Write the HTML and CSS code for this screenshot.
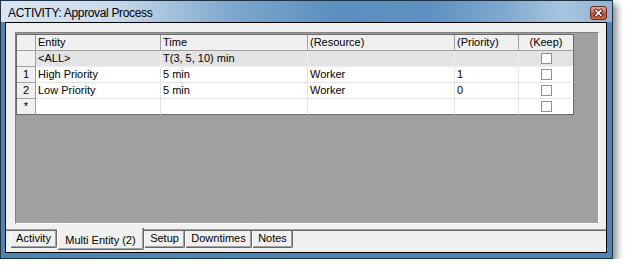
FILE: index.html
```html
<!DOCTYPE html>
<html lang="en">
<head>
    <meta charset="UTF-8">
    <title>ACTIVITY: Approval Process</title>
    <link rel="stylesheet" href="styles.css">
</head>
<body>
    <div class="window">
        <div class="titlebar">
            <span class="title">ACTIVITY: Approval Process</span>
            <span class="close-btn">
                <svg width="17" height="14" viewBox="0 0 17 14">
                    <defs>
                        <linearGradient id="closeGrad" x1="0" y1="0" x2="0" y2="1">
                            <stop offset="0" stop-color="#eab0a0"/>
                            <stop offset="0.45" stop-color="#d26a52"/>
                            <stop offset="0.5" stop-color="#c2452c"/>
                            <stop offset="1" stop-color="#d9694a"/>
                        </linearGradient>
                    </defs>
                    <rect x="0.5" y="0.5" width="16" height="13" rx="2.5" fill="url(#closeGrad)" stroke="#6b2a1e"/>
                    <path d="M6 4.5 L11 9.5 M11 4.5 L6 9.5" stroke="#3b1a14" stroke-width="3.2" stroke-linecap="square"/>
                    <path d="M6 4.5 L11 9.5 M11 4.5 L6 9.5" stroke="#ffffff" stroke-width="1.6" stroke-linecap="square"/>
                </svg>
            </span>
        </div>
        <div class="client">
            <div class="tab-body">
                <div class="grid-area">
                    <table class="grid">
                        <tr class="head-row">
                            <th class="row-head"></th>
                            <th class="col-entity">Entity</th>
                            <th class="col-time">Time</th>
                            <th class="col-resource">(Resource)</th>
                            <th class="col-priority">(Priority)</th>
                            <th class="col-keep center">(Keep)</th>
                        </tr>
                        <tr class="all-row">
                            <td class="row-head"></td>
                            <td>&lt;ALL&gt;</td>
                            <td>T(3, 5, 10) min</td>
                            <td></td>
                            <td></td>
                            <td class="center"><span class="checkbox"></span></td>
                        </tr>
                        <tr>
                            <td class="row-head">1</td>
                            <td>High Priority</td>
                            <td>5 min</td>
                            <td>Worker</td>
                            <td>1</td>
                            <td class="center"><span class="checkbox"></span></td>
                        </tr>
                        <tr>
                            <td class="row-head">2</td>
                            <td>Low Priority</td>
                            <td>5 min</td>
                            <td>Worker</td>
                            <td>0</td>
                            <td class="center"><span class="checkbox"></span></td>
                        </tr>
                        <tr class="last-row">
                            <td class="row-head">*</td>
                            <td></td>
                            <td></td>
                            <td></td>
                            <td></td>
                            <td class="center"><span class="checkbox"></span></td>
                        </tr>
                    </table>
                </div>
            </div>
            <div class="tab-strip">
                <div class="tab tab-activity">Activity</div>
                <div class="tab tab-multi selected">Multi Entity (2)</div>
                <div class="tab tab-setup">Setup</div>
                <div class="tab tab-downtimes">Downtimes</div>
                <div class="tab tab-notes">Notes</div>
            </div>
        </div>
    </div>
</body>
</html>
```

FILE: styles.css
```css
body {
    margin: 0;
    background-color: #fff;
    font-family: "Liberation Sans", Arial, sans-serif;
    font-size: 11px;
    color: #000;
}
.window {
    width: 613px;
    height: 259px;
    box-sizing: border-box;
    border: 1px solid #1e3246;
    background-color: #4d84b6; /* blue frame */
    box-shadow: 4px 4px 7px rgba(0, 0, 0, 0.45);
    display: flex;
    flex-direction: column;
    overflow: hidden;
}
.titlebar {
    height: 21px;
    flex: none;
    display: flex;
    align-items: flex-start;
    padding-left: 7px;
    background: linear-gradient(to right, #d9e6f2 0%, #c9dbec 18%, #7da7cd 38%, #5a8fbf 55%, #5d91c0 70%, #7fa8cf 82%, #a8c5df 92%, #90b3d3 100%);
}
.title {
    font-size: 12px;
    letter-spacing: -0.35px;
    line-height: 14px;
    margin-top: 5px;
}
.close-btn {
    margin-left: auto;
    margin-right: 5px;
    margin-top: 5px;
    width: 17px;
    height: 14px;
}
.close-btn svg {
    display: block;
}
.client {
    flex: 1;
    min-height: 0;
    margin: 0 5px 5px 4px;
    border: 1px solid #000;
    background-color: #f0f0f0;
    display: flex;
    flex-direction: column;
}
.tab-body {
    height: 192px;
    flex: none;
    padding: 9px 7px 5px 9px;
    border-bottom: 1px solid #a0a0a0;
    box-shadow: 0 1px 0 #696969;
}
.grid-area {
    width: 584px;
    height: 192px;
    box-sizing: border-box;
    border: 1px solid;
    border-color: #828282 #fff #fff #828282;
    background-color: #a0a0a0;
}
.grid {
    margin-top: 1px;
    border-collapse: separate;
    border-spacing: 0;
    border-left: 1px solid #6a6a6a;
    border-top: 1px solid #6a6a6a;
    table-layout: fixed;
}
.grid th,
.grid td {
    box-sizing: border-box;
    height: 16px;
    padding: 0 0 0 2px;
    line-height: 15px;
    font-weight: normal;
    text-align: left;
    white-space: nowrap;
    border-right: 1px solid #e3e3e3;
    border-bottom: 1px solid #e3e3e3;
    background-color: #fff;
}
.grid th {
    background-color: #f0f0f0;
    border-right-color: #a0a0a0;
    border-bottom-color: #a0a0a0;
}
.grid .row-head {
    width: 19px;
    padding: 0;
    text-align: center;
    background-color: #f0f0f0;
    border-right-color: #a0a0a0;
    border-bottom-color: #a0a0a0;
}
.col-entity { width: 125px; }
.col-time { width: 147px; }
.col-resource { width: 147px; }
.col-priority { width: 64px; }
.col-keep { width: 55px; }
.grid .center {
    text-align: center;
    padding: 0;
}
.grid tr > :last-child {
    border-right-color: #6a6a6a;
}
.all-row td {
    background-color: #e3e3e3;
    border-right-color: #f0f0f0;
    border-bottom-color: #f0f0f0;
}
.last-row td,
.grid .last-row .row-head {
    border-bottom-color: #6a6a6a;
}
.checkbox {
    display: inline-block;
    width: 11px;
    height: 11px;
    box-sizing: border-box;
    border: 1px solid #8e8f8f;
    background-color: #fff;
    vertical-align: -2px;
}
.tab-strip {
    display: flex;
    align-items: flex-start;
    padding-left: 4px;
    margin-top: 1px;
}
.tab {
    height: 17px;
    box-sizing: border-box;
    border-left: 1px solid #fff;
    border-right: 1px solid #696969;
    border-bottom: 1px solid #696969;
    box-shadow: inset -1px -1px 0 #a0a0a0;
    border-radius: 0 0 2px 2px;
    text-align: center;
    line-height: 15px;
}
.tab-activity { width: 47px; }
.tab-multi { width: 87px; }
.tab-setup { width: 41px; }
.tab-downtimes { width: 67px; }
.tab-notes { width: 41px; }
.tab.selected {
    height: 22px;
    margin-top: -3px;
    padding-top: 5px;
    background-color: #f0f0f0;
    position: relative;
    z-index: 1;
}
```
